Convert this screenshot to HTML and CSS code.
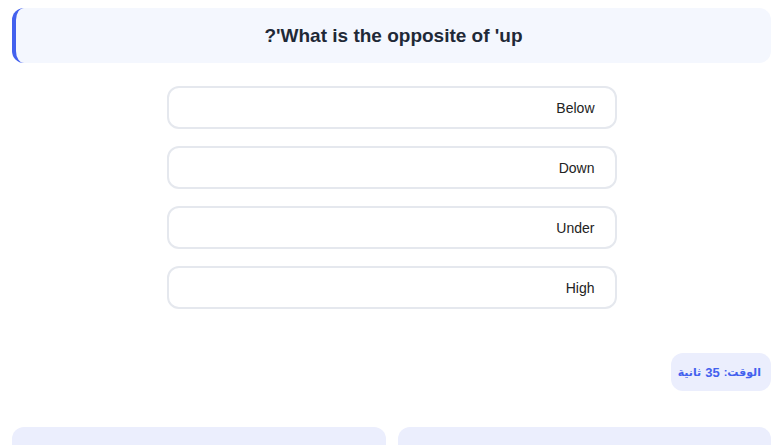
FILE: index.html
```html
<!DOCTYPE html>
<html lang="ar" dir="rtl">
<head>
<meta charset="utf-8">
<link rel="stylesheet" href="styles.css">
</head>
<body>
<div class="page">
  <div class="question">What is the opposite of 'up'?</div>
  <div class="options">
    <div class="option">Below</div>
    <div class="option">Down</div>
    <div class="option">Under</div>
    <div class="option">High</div>
  </div>
  <div class="timer-row">
    <div class="timer">الوقت: <span class="num">35</span> ثانية</div>
  </div>
  <div class="cards">
    <div class="card"><div class="card-title">النتيجة</div></div>
    <div class="card"><div class="card-title">الإحصائيات</div></div>
  </div>
</div>
</body>
</html>
```
FILE: styles.css
```css
html, body {
  margin: 0;
  padding: 0;
  background: #ffffff;
}
body {
  font-family: "Liberation Sans", Arial, "DejaVu Sans", sans-serif;
  color: #1f2937;
}
.page {
  padding: 8px 11px 0 12px;
}
.question {
  background: #f4f7fe;
  border-left: 4px solid #4361ee;
  border-radius: 12px;
  height: 55px;
  display: flex;
  align-items: center;
  justify-content: center;
  font-size: 19px;
  font-weight: bold;
  color: #1f2937;
  box-sizing: border-box;
}
.options {
  width: 450px;
  margin: 23px auto 0;
  display: flex;
  flex-direction: column;
  gap: 17px;
}
.option {
  height: 43px;
  box-sizing: border-box;
  border: 2px solid #e5e8ee;
  border-radius: 12px;
  display: flex;
  align-items: center;
  padding: 0 20px;
  font-size: 14px;
  color: #222222;
  background: #ffffff;
}
.timer-row {
  display: flex;
  margin-top: 44px;
}
.timer {
  background: #ebeefd;
  color: #4361ee;
  font-weight: bold;
  font-size: 11px;
  border-radius: 12px;
  height: 38px;
  width: 100px;
  box-sizing: border-box;
  padding: 0 10px;
  display: flex;
  align-items: center;
  gap: 4px;
  white-space: nowrap;
}
.timer .num {
  font-size: 13px;
}
.cards {
  margin-top: 36px;
  display: grid;
  grid-template-columns: 1fr 1fr;
  gap: 12px;
}
.card {
  background: #ebeefd;
  border-radius: 12px 12px 0 0;
  height: 60px;
  padding: 18px 20px;
}
.card-title {
  font-size: 14px;
  font-weight: bold;
  color: #1f2937;
}
```
